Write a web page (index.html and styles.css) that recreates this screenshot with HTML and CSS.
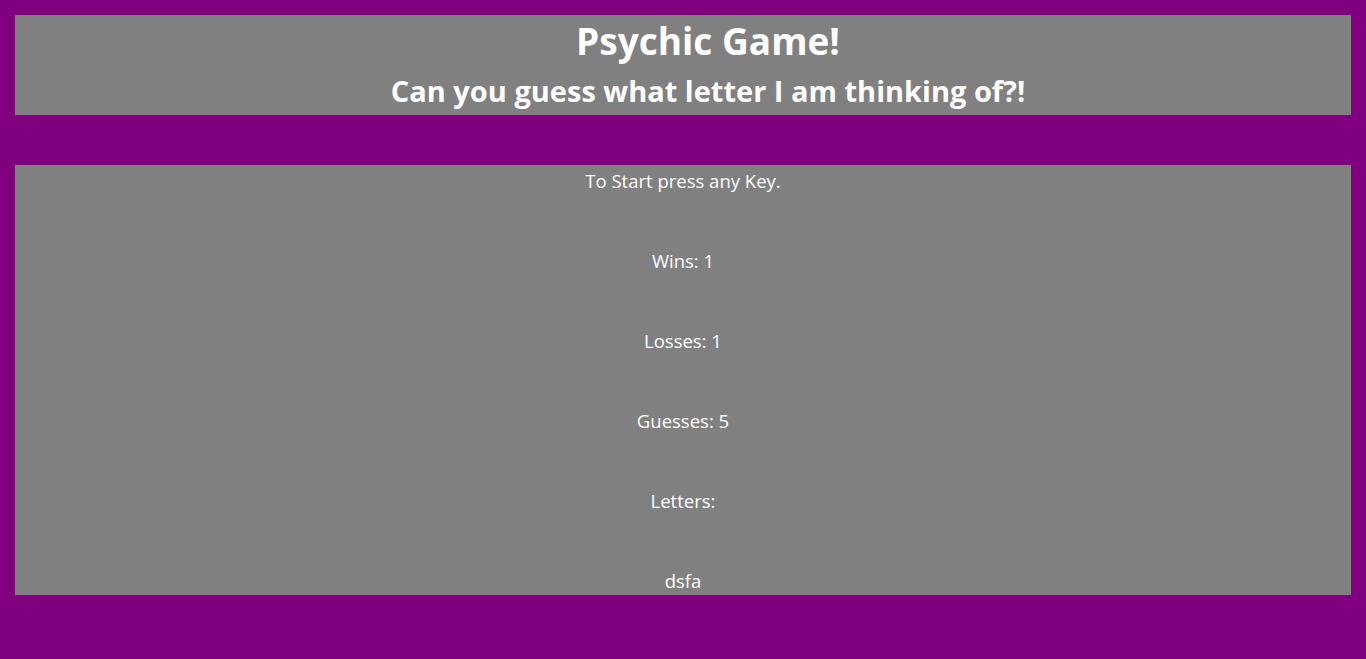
FILE: index.html
```html
<!DOCTYPE html>
<html>
<head>
<meta charset="utf-8">
<title>Psychic Game</title>
<link rel="stylesheet" href="styles.css">
</head>
<body>
<header class="banner">
  <h1 class="title">Psychic Game!</h1>
  <h2 class="subtitle">Can you guess what letter I am thinking of?!</h2>
</header>
<main class="board">
  <p class="line">To Start press any Key.</p>
  <p class="line">Wins: 1</p>
  <p class="line">Losses: 1</p>
  <p class="line">Guesses: 5</p>
  <p class="line">Letters:</p>
  <p class="line">dsfa</p>
</main>
</body>
</html>
```
FILE: styles.css
```css
html, body {
  margin: 0;
  height: 100%;
}
body {
  background: #800080;
  padding: 15px;
  box-sizing: border-box;
  font-family: "Open Sans", "Noto Sans", sans-serif;
  color: #ffffff;
  display: flex;
  flex-direction: column;
  gap: 50px;
}
.banner {
  background: #808080;
  height: 100px;
  padding-left: 50px;
  display: flex;
  flex-direction: column;
  align-items: center;
  text-align: center;
}
.title {
  margin: 4px 0 0;
  font-size: 37px;
  line-height: 44px;
  font-weight: 700;
}
.subtitle {
  margin: 10px 0 0;
  font-size: 29px;
  line-height: 36px;
  font-weight: 700;
}
.board {
  background: #808080;
  height: 430px;
  box-sizing: border-box;
  padding-top: 4px;
  display: flex;
  flex-direction: column;
  align-items: center;
  gap: 56px;
}
.line {
  margin: 0;
  font-size: 18.5px;
  line-height: 24px;
}
```
